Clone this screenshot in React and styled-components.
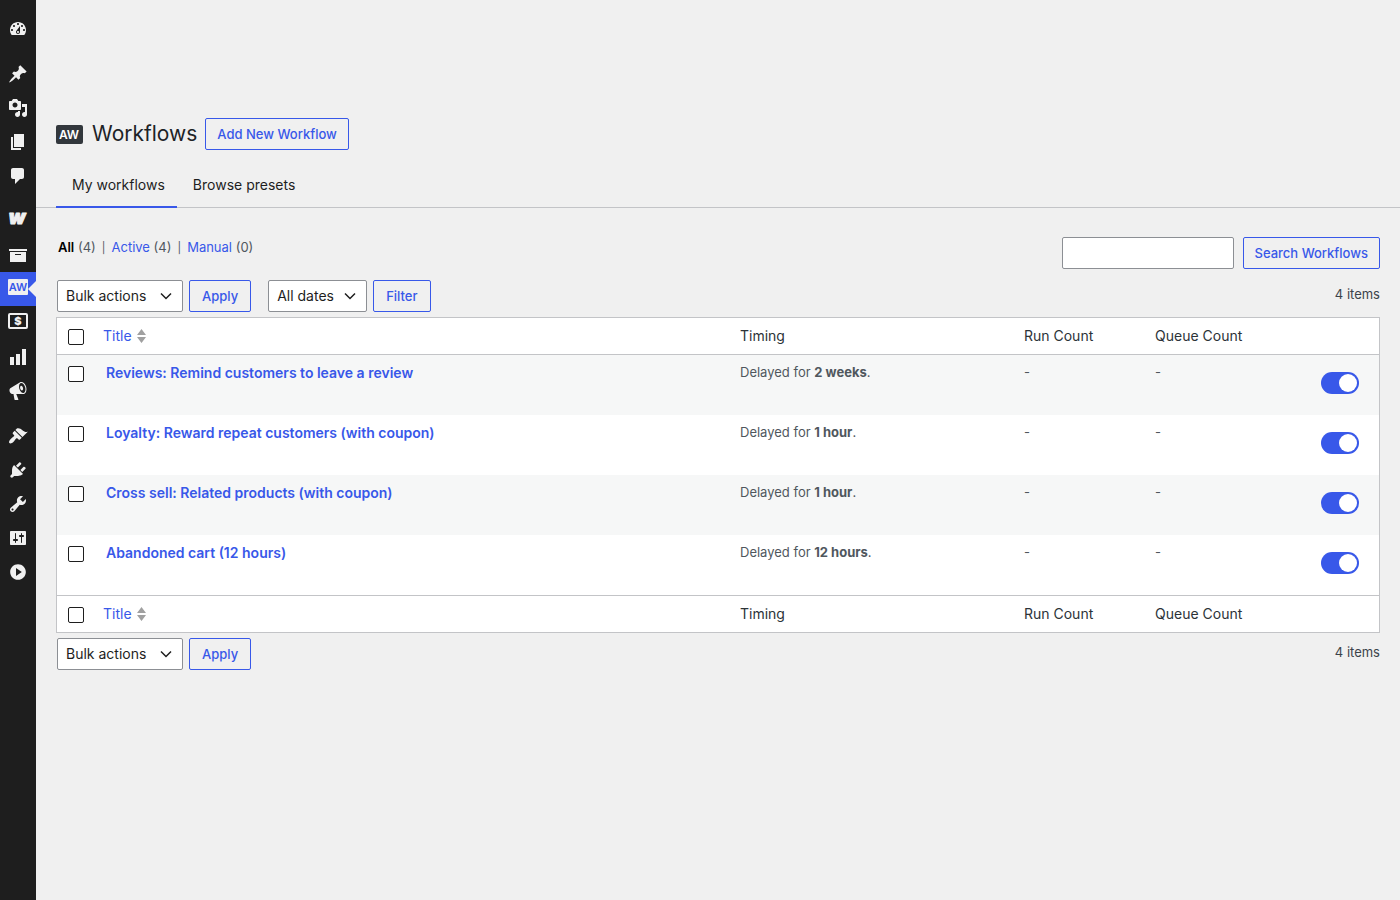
import React, { useState } from 'react'
import styled, { createGlobalStyle, css } from 'styled-components'

const blue = '#3858e9'
const ink = '#1e1e1e'

const GlobalStyle = createGlobalStyle`
  * {
    box-sizing: border-box;
  }
  body {
    margin: 0;
    background: #f0f0f0;
    color: #3c434a;
    font-family: Inter, 'Open Sans', sans-serif;
    font-size: 13px;
    line-height: 20px;
    -webkit-font-smoothing: antialiased;
  }
  button, input, select {
    font-family: inherit;
  }
`

const Shell = styled.div`
  display: flex;
  min-height: 100vh;
`

const Sidebar = styled.nav`
  flex: none;
  width: 36px;
  padding-top: 12px;
  background: ${ink};
`

const MenuGroup = styled.ul`
  list-style: none;
  margin: 0 0 11px;
  padding: 0;
`

const MenuLink = styled.a`
  position: relative;
  display: flex;
  align-items: ${ props => props.$raised ? 'flex-start' : 'center' };
  justify-content: center;
  height: 34px;
  padding-top: ${ props => props.$raised ? '5px' : '0' };
  color: #f0f0f0;
  text-decoration: none;
  ${ props => props.$current && css`
    background: ${blue};
    &::after {
      content: '';
      position: absolute;
      right: 0;
      top: 9px;
      border: 8px solid transparent;
      border-right-color: #f0f0f0;
    }
  ` }
`

const MenuIcon = styled.svg`
  display: block;
  width: 20px;
  height: 20px;
  overflow: visible;
  fill: currentColor;
`

const Main = styled.main`
  flex: 1;
  min-width: 0;
  padding-top: 118px;
`

const PageHeader = styled.header`
  display: flex;
  align-items: center;
  height: 32px;
  padding: 0 20px;
`

const Logo = styled.svg`
  width: 27px;
  height: 19px;
  margin-right: 9px;
`

const PageTitle = styled.h1`
  margin: 0 8px 0 0;
  color: #1d2327;
  font-size: 21px;
  font-weight: 400;
  line-height: 32px;
`

const Button = styled.button`
  height: 32px;
  padding: 0 ${ props => props.$long ? '11px' : '12px' };
  border: 1px solid ${blue};
  border-radius: 2px;
  background: transparent;
  color: ${blue};
  font-size: 13px;
  font-weight: 500;
  line-height: 30px;
  white-space: nowrap;
  cursor: pointer;
`

const Tabs = styled.nav`
  display: flex;
  margin-top: 12px;
  padding: 0 20px;
  border-bottom: 1px solid #c3c4c7;
`

const Tab = styled.a`
  margin-bottom: -1px;
  padding: 12px 12px 10px 16px;
  border-bottom: 2px solid ${ props => props.$active ? blue : 'transparent' };
  color: ${ink};
  font-size: 14px;
  line-height: 22px;
  text-decoration: none;
`

const Content = styled.div`
  padding: 29px 20px 40px;
`

const TopRow = styled.div`
  display: flex;
  justify-content: space-between;
  align-items: flex-start;
`

const Views = styled.ul`
  display: flex;
  list-style: none;
  margin: 0;
  padding: 0 2px;
  color: #50575e;
  li + li::before {
    content: '|';
    margin: 0 6px;
    font-size: 11px;
  }
`

const ViewLink = styled.a`
  color: ${ props => props.$active ? '#000' : blue };
  font-weight: ${ props => props.$active ? 600 : 400 };
  text-decoration: none;
`

const SearchForm = styled.form`
  display: flex;
  gap: 9px;
`

const SearchBox = styled.input`
  width: 172px;
  height: 32px;
  padding: 0 8px;
  border: 1px solid #8c8f94;
  border-radius: 2px;
  background: #fff;
  font-size: 14px;
`

const TableNav = styled.div`
  display: flex;
  align-items: flex-start;
  margin-top: ${ props => props.$bottom ? '5px' : '11px' };
  padding-left: 1px;
`

const Actions = styled.form`
  display: flex;
  gap: 6px;
  margin-right: 17px;
`

const Select = styled.select`
  appearance: none;
  width: ${ props => props.$width };
  height: 32px;
  padding: 0 24px 0 8px;
  border: 1px solid #8c8f94;
  border-radius: 2px;
  color: ${ink};
  font-size: 14px;
  line-height: 30px;
  background: #fff url("data:image/svg+xml,%3Csvg xmlns='http://www.w3.org/2000/svg' width='12' height='12' viewBox='0 0 12 12'%3E%3Cpath d='M1 3.5l5 5 5-5' fill='none' stroke='%231e1e1e' stroke-width='1.5'/%3E%3C/svg%3E") no-repeat right 10px center;
`

const ItemCount = styled.span`
  margin-left: auto;
  line-height: 28px;
`

const Table = styled.table`
  width: 100%;
  margin-top: 5px;
  border: 1px solid #c3c4c7;
  border-spacing: 0;
  table-layout: fixed;
  background: #fff;
  thead th, thead td {
    border-bottom: 1px solid #c3c4c7;
  }
  tfoot th, tfoot td {
    border-top: 1px solid #c3c4c7;
  }
`

const Row = styled.tr`
  height: 60px;
  &:nth-child(odd) {
    background: #f6f7f7;
  }
`

const HeadCell = styled.th`
  width: ${ props => props.$width || 'auto' };
  height: 37px;
  padding: 8px 9px;
  color: #2c3338;
  font-size: 14px;
  font-weight: 400;
  line-height: 20px;
  text-align: left;
  vertical-align: top;
`

const CheckCell = styled.td`
  width: 37px;
  padding: 11px 0 0 11px;
  vertical-align: top;
`

const Cell = styled.td`
  padding: 7px 9px;
  color: #50575e;
  vertical-align: top;
`

const TitleCell = styled(Cell)`
  padding: 8px 12px;
`

const ToggleCell = styled(Cell)`
  padding: 17px 10px 0;
`

const SortLink = styled.a`
  display: inline-flex;
  align-items: center;
  gap: 5px;
  color: ${blue};
  text-decoration: none;
`

const SortArrows = styled.svg`
  width: 9px;
  height: 16px;
  fill: #a0a0a0;
`

const RowTitle = styled.a`
  color: ${blue};
  font-size: 14px;
  font-weight: 600;
  text-decoration: none;
`

const Checkbox = styled.input`
  appearance: none;
  display: block;
  width: 16px;
  height: 16px;
  margin: 0;
  border: 1px solid ${ink};
  border-radius: 2px;
  background: #fff;
  &:checked {
    background: ${blue};
    border-color: ${blue};
  }
`

const Toggle = styled.input`
  appearance: none;
  display: block;
  width: 38px;
  height: 22px;
  margin: 0;
  padding: 2px;
  border-radius: 11px;
  background: #a7aaad;
  cursor: pointer;
  &::before {
    content: '';
    display: block;
    width: 18px;
    height: 18px;
    border-radius: 50%;
    background: #fff;
  }
  &:checked {
    background: ${blue};
  }
  &:checked::before {
    margin-left: auto;
  }
`

const icons = {
  dashboard: 'M3.76 16h12.48c1.1-1.37 1.76-3.11 1.76-5 0-4.42-3.58-8-8-8s-8 3.58-8 8c0 1.89.66 3.63 1.76 5zM10 4c.55 0 1 .45 1 1s-.45 1-1 1-1-.45-1-1 .45-1 1-1zM6 6c.55 0 1 .45 1 1s-.45 1-1 1-1-.45-1-1 .45-1 1-1zm8 0c.55 0 1 .45 1 1s-.45 1-1 1-1-.45-1-1 .45-1 1-1zm-5.37 5.55L12 7v6c0 1.1-.9 2-2 2s-2-.9-2-2c0-.57.24-1.08.63-1.45zM4 10c.55 0 1 .45 1 1s-.45 1-1 1-1-.45-1-1 .45-1 1-1zm12 0c.55 0 1 .45 1 1s-.45 1-1 1-1-.45-1-1 .45-1 1-1zm-5 3c0-.55-.45-1-1-1s-1 .45-1 1 .45 1 1 1 1-.45 1-1z',
  posts: 'M10.44 3.02l1.82-1.82 6.36 6.35-1.83 1.82c-1.05-.68-2.48-.57-3.41.36l-.75.75c-.92.93-1.04 2.35-.35 3.41l-1.83 1.82-2.41-2.41-2.8 2.79c-.42.42-3.38 2.71-3.8 2.29s1.86-3.39 2.28-3.81l2.79-2.79L4.1 9.36l1.83-1.82c1.05.69 2.48.57 3.4-.36l.75-.75c.93-.92 1.05-2.35.36-3.41z',
  media: 'M13 11V4c0-.55-.45-1-1-1h-1.67L9 1H5L3.67 3H2c-.55 0-1 .45-1 1v7c0 .55.45 1 1 1h10c.55 0 1-.45 1-1zM7 4.5c1.38 0 2.5 1.12 2.5 2.5S8.38 9.5 7 9.5 4.5 8.38 4.5 7 5.62 4.5 7 4.5zM14 6h5v10.5c0 1.38-1.12 2.5-2.5 2.5S14 17.88 14 16.5s1.12-2.5 2.5-2.5c.17 0 .34.02.5.05V9h-3V6zm-4 8.05V13h2v3.5c0 1.38-1.12 2.5-2.5 2.5S7 17.88 7 16.5 8.12 14 9.5 14c.17 0 .34.02.5.05z',
  pages: 'M6 15V2h10v13H6zm-1 1h8v2H3V5h2v11z',
  comments: 'M5 2h9c1.1 0 2 .9 2 2v7c0 1.1-.9 2-2 2h-2l-5 5v-5H5c-1.1 0-2-.9-2-2V4c0-1.1.9-2 2-2z',
  products: 'M19 4v2H1V4h18zM2 7h16v10H2V7zm11 3V9H7v1h6z',
  analytics: 'M18 18V2h-4v16h4zm-6 0V7H8v11h4zm-6 0v-8H2v8h4z',
  marketing: 'M18.15 5.94c.46 1.62.38 3.22-.02 4.48-.42 1.28-1.26 2.18-2.3 2.48-.16.06-.26.06-.4.06-.06.02-.12.02-.18.02-.06.02-.14.02-.22.02h-6.8l2.22 5.5c.02.14-.06.26-.14.34-.08.1-.24.16-.34.16H6.95c-.1 0-.26-.06-.34-.16-.08-.08-.16-.2-.14-.34l-1-5.5H4.25l-.02-.02c-.5.06-1.08-.18-1.54-.62s-.88-1.08-1.06-1.88c-.24-.8-.2-1.56-.02-2.2.18-.62.58-1.08 1.06-1.3l.02-.02 9-5.4c.1-.06.18-.1.24-.16.06-.04.14-.08.24-.12.16-.08.28-.12.5-.18 1.04-.3 2.24.1 3.22.98s1.84 2.24 2.26 3.86zm-2.58 5.98h-.02c.4-.1.74-.34 1.04-.7.58-.7.86-1.76.86-3.04 0-.64-.1-1.3-.28-1.98-.34-1.36-1.02-2.5-1.78-3.24s-1.68-1.1-2.46-.88c-.82.22-1.4.96-1.7 2-.32 1.04-.28 2.36.06 3.72.38 1.36 1 2.5 1.8 3.24.78.74 1.62 1.1 2.48.88zm-2.54-7.08c.22-.04.42-.02.62.04.38.16.76.48 1.02 1s.42 1.2.42 1.78c0 .3-.04.56-.12.8-.18.48-.44.84-.86.94-.34.1-.8-.06-1.14-.4s-.64-.86-.78-1.5c-.18-.62-.12-1.24.02-1.72s.48-.84.82-.94z',
  appearance: 'M14.48 11.06L7.41 3.99l1.5-1.5c.5-.56 2.3-.47 3.51.32 1.21.8 1.43 1.28 2.91 2.1 1.18.64 2.45 1.26 4.45.85zm-.71.71L6.7 4.7 4.93 6.47c-.39.39-.39 1.02 0 1.41l1.06 1.06c.39.39.39 1.03 0 1.42-.6.6-1.43 1.11-2.21 1.69-.35.26-.7.53-1.01.84C1.43 14.23.4 16.08 1.4 17.07c.99 1 2.84-.03 4.18-1.36.31-.31.58-.66.85-1.02.57-.78 1.08-1.61 1.69-2.21.39-.39 1.02-.39 1.41 0l1.06 1.06c.39.39 1.02.39 1.41 0z',
  plugins: 'M13.11 4.36L9.87 7.6 8 5.73l3.24-3.24c.35-.34 1.05-.2 1.56.32.52.51.66 1.21.31 1.55zm-8 1.77l.91-1.12 9.01 9.01-1.19.84c-.71.71-2.63 1.16-3.82 1.16H6.14L4.9 17.26c-.59.59-1.54.59-2.12 0-.59-.58-.59-1.53 0-2.12l1.24-1.24v-3.88c0-1.13.4-3.19 1.09-3.89zm7.26 3.97l3.24-3.24c.34-.35 1.04-.21 1.55.31.52.51.66 1.21.31 1.55l-3.24 3.25z',
  tools: 'M16.68 9.77c-1.34 1.34-3.3 1.67-4.95.99l-5.41 6.52c-.99.99-2.59.99-3.58 0s-.99-2.59 0-3.57l6.52-5.42c-.68-1.65-.35-3.61.99-4.95 1.28-1.28 3.12-1.62 4.72-1.06l-2.89 2.89 2.82 2.82 2.86-2.87c.53 1.58.18 3.39-1.08 4.65zM3.81 16.21c.4.39 1.04.39 1.43 0 .4-.4.4-1.04 0-1.43-.39-.4-1.03-.4-1.43 0-.39.39-.39 1.03 0 1.43z',
  settings: 'M18 16V4c0-.55-.45-1-1-1H3c-.55 0-1 .45-1 1v12c0 .55.45 1 1 1h14c.55 0 1-.45 1-1zM8 11h1c.55 0 1 .45 1 1s-.45 1-1 1H8v1.5c0 .28-.22.5-.5.5s-.5-.22-.5-.5V13H6c-.55 0-1-.45-1-1s.45-1 1-1h1V5.5c0-.28.22-.5.5-.5s.5.22.5.5V11zm5-2h-1c-.55 0-1-.45-1-1s.45-1 1-1h1V5.5c0-.28.22-.5.5-.5s.5.22.5.5V7h1c.55 0 1 .45 1 1s-.45 1-1 1h-1v5.5c0 .28-.22.5-.5.5s-.5-.22-.5-.5V9z',
  collapse: 'M10 2.16c-4.33 0-7.84 3.51-7.84 7.84s3.51 7.84 7.84 7.84 7.84-3.51 7.84-7.84S14.29 2.16 10 2.16zM8 13.88V6.12l5.82 3.85z',
}

// logos that are more than one path
const logos = {
  woo: (
    <text x='9' y='15' textAnchor='middle' fontSize='19' fontWeight='900' fontStyle='italic' stroke='currentColor' strokeWidth='1' strokeLinejoin='round'>w</text>
  ),
  automate: (
    <>
      <rect y='2' width='20' height='16' rx='1' />
      <text x='10' y='14' textAnchor='middle' fontSize='11' fontWeight='600' fill={blue}>AW</text>
    </>
  ),
  payments: (
    <>
      <rect x='1' y='3' width='18' height='14' rx='1' fill='none' stroke='currentColor' strokeWidth='2' />
      <text x='10' y='14' textAnchor='middle' fontSize='11' fontWeight='900'>$</text>
    </>
  ),
}

const menu = [
  [{ id: 'dashboard' }],
  [{ id: 'posts' }, { id: 'media' }, { id: 'pages' }, { id: 'comments' }],
  [
    { id: 'woo', raised: true },
    { id: 'products' },
    { id: 'automate', raised: true, current: true },
    { id: 'payments', raised: true },
    { id: 'analytics' },
    { id: 'marketing' },
  ],
  [{ id: 'appearance' }, { id: 'plugins' }, { id: 'tools' }, { id: 'settings' }, { id: 'collapse' }],
]

const workflows = [
  { id: 1, title: 'Reviews: Remind customers to leave a review', delay: '2 weeks' },
  { id: 2, title: 'Loyalty: Reward repeat customers (with coupon)', delay: '1 hour' },
  { id: 3, title: 'Cross sell: Related products (with coupon)', delay: '1 hour' },
  { id: 4, title: 'Abandoned cart (12 hours)', delay: '12 hours' },
]

const HeadingRow = ({ checked, onCheck }) => (
  <tr>
    <CheckCell>
      <Checkbox type='checkbox' aria-label='Select all' checked={checked} onChange={onCheck} />
    </CheckCell>
    <HeadCell scope='col'>
      <SortLink href='#title'>
        Title
        <SortArrows viewBox='0 0 9 16'>
          <path d='M4.500 1L9 7H0zM0 9h9l-4.500 6z' />
        </SortArrows>
      </SortLink>
    </HeadCell>
    <HeadCell scope='col' $width='284px'>Timing</HeadCell>
    <HeadCell scope='col' $width='131px'>Run Count</HeadCell>
    <HeadCell scope='col' $width='165px'>Queue Count</HeadCell>
    <HeadCell as='td' $width='68px' />
  </tr>
)

const BulkActions = () => (
  <Actions onSubmit={e => e.preventDefault()}>
    <Select aria-label='Select bulk action' $width='126px'>
      <option>Bulk actions</option>
    </Select>
    <Button>Apply</Button>
  </Actions>
)

const App = () => {
  const [selected, setSelected] = useState([])
  const allSelected = selected.length === workflows.length

  const toggleAll = () => setSelected(allSelected ? [] : workflows.map(w => w.id))
  const toggleOne = id => setSelected(
    selected.includes(id) ? selected.filter(s => s !== id) : [...selected, id]
  )

  return (
    <Shell>
      <GlobalStyle />
      <Sidebar aria-label='Main menu'>
        {menu.map((group, i) => (
          <MenuGroup key={i}>
            {group.map(item => (
              <li key={item.id}>
                <MenuLink href={`#${item.id}`} aria-label={item.id} $raised={item.raised} $current={item.current}>
                  <MenuIcon viewBox='0 0 20 20'>
                    {logos[item.id] || <path d={icons[item.id]} />}
                  </MenuIcon>
                </MenuLink>
              </li>
            ))}
          </MenuGroup>
        ))}
      </Sidebar>
      <Main>
        <PageHeader>
          <Logo viewBox='0 0 27 19'>
            <rect width='27' height='19' rx='2' fill='#32373c' />
            <text x='13' y='14' textAnchor='middle' fontSize='12' fontWeight='600' fill='#fff'>AW</text>
          </Logo>
          <PageTitle>Workflows</PageTitle>
          <Button $long>Add New Workflow</Button>
        </PageHeader>
        <Tabs>
          <Tab href='#mine' $active>My workflows</Tab>
          <Tab href='#presets'>Browse presets</Tab>
        </Tabs>
        <Content>
          <TopRow>
            <Views>
              <li><ViewLink href='#all' $active>All</ViewLink> (4)</li>
              <li><ViewLink href='#active'>Active</ViewLink> (4)</li>
              <li><ViewLink href='#manual'>Manual</ViewLink> (0)</li>
            </Views>
            <SearchForm onSubmit={e => e.preventDefault()}>
              <SearchBox type='search' aria-label='Search Workflows' />
              <Button $long>Search Workflows</Button>
            </SearchForm>
          </TopRow>
          <TableNav>
            <BulkActions />
            <Actions onSubmit={e => e.preventDefault()}>
              <Select aria-label='Filter by date' $width='99px'>
                <option>All dates</option>
              </Select>
              <Button>Filter</Button>
            </Actions>
            <ItemCount>4 items</ItemCount>
          </TableNav>
          <Table>
            <thead>
              <HeadingRow checked={allSelected} onCheck={toggleAll} />
            </thead>
            <tbody>
              {workflows.map(({ id, title, delay }) => (
                <Row key={id}>
                  <CheckCell>
                    <Checkbox
                      type='checkbox'
                      aria-label={`Select ${title}`}
                      checked={selected.includes(id)}
                      onChange={() => toggleOne(id)}
                    />
                  </CheckCell>
                  <TitleCell><RowTitle href={`#workflow-${id}`}>{title}</RowTitle></TitleCell>
                  <Cell>Delayed for <b>{delay}</b>.</Cell>
                  <Cell>-</Cell>
                  <Cell>-</Cell>
                  <ToggleCell>
                    <Toggle type='checkbox' role='switch' aria-label={`${title} active`} defaultChecked />
                  </ToggleCell>
                </Row>
              ))}
            </tbody>
            <tfoot>
              <HeadingRow checked={allSelected} onCheck={toggleAll} />
            </tfoot>
          </Table>
          <TableNav $bottom>
            <BulkActions />
            <ItemCount>4 items</ItemCount>
          </TableNav>
        </Content>
      </Main>
    </Shell>
  )
}

export default App
